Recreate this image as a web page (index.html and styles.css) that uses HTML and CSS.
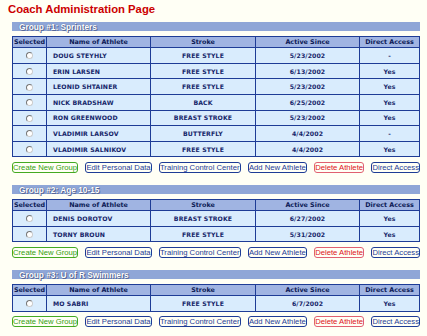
FILE: index.html
```html
<!DOCTYPE html>
<html lang="en">
<head>
    <meta charset="UTF-8">
    <title>Coach Administration Page</title>
    <link rel="stylesheet" href="styles.css">
</head>
<body>
    <h1 class="page-title">Coach Administration Page</h1>

    <div class="group">
        <div class="group-bar">Group #1: Sprinters</div>
        <table class="athletes">
            <colgroup>
                <col class="c-sel"><col class="c-name"><col class="c-stroke"><col class="c-date"><col class="c-access">
            </colgroup>
            <tr class="head">
                <th>Selected</th><th>Name of Athlete</th><th>Stroke</th><th>Active Since</th><th>Direct Access</th>
            </tr>
            <tr><td class="sel"><span class="radio"></span></td><td class="name">DOUG STEYHLY</td><td>FREE STYLE</td><td>5/23/2002</td><td>-</td></tr>
            <tr><td class="sel"><span class="radio"></span></td><td class="name">ERIN LARSEN</td><td>FREE STYLE</td><td>6/13/2002</td><td>Yes</td></tr>
            <tr><td class="sel"><span class="radio"></span></td><td class="name">LEONID SHTAINER</td><td>FREE STYLE</td><td>5/23/2002</td><td>Yes</td></tr>
            <tr><td class="sel"><span class="radio"></span></td><td class="name">NICK BRADSHAW</td><td>BACK</td><td>6/25/2002</td><td>Yes</td></tr>
            <tr><td class="sel"><span class="radio"></span></td><td class="name">RON GREENWOOD</td><td>BREAST STROKE</td><td>5/23/2002</td><td>Yes</td></tr>
            <tr><td class="sel"><span class="radio"></span></td><td class="name">VLADIMIR LARSOV</td><td>BUTTERFLY</td><td>4/4/2002</td><td>-</td></tr>
            <tr><td class="sel"><span class="radio"></span></td><td class="name">VLADIMIR SALNIKOV</td><td>FREE STYLE</td><td>4/4/2002</td><td>Yes</td></tr>
        </table>
        <div class="actions">
            <button class="btn green">Create New Group</button>
            <button class="btn">Edit Personal Data</button>
            <button class="btn">Training Control Center</button>
            <button class="btn">Add New Athlete</button>
            <button class="btn red">Delete Athlete</button>
            <button class="btn">Direct Access</button>
        </div>
    </div>

    <div class="group">
        <div class="group-bar">Group #2: Age 10-15</div>
        <table class="athletes">
            <colgroup>
                <col class="c-sel"><col class="c-name"><col class="c-stroke"><col class="c-date"><col class="c-access">
            </colgroup>
            <tr class="head">
                <th>Selected</th><th>Name of Athlete</th><th>Stroke</th><th>Active Since</th><th>Direct Access</th>
            </tr>
            <tr><td class="sel"><span class="radio"></span></td><td class="name">DENIS DOROTOV</td><td>BREAST STROKE</td><td>6/27/2002</td><td>Yes</td></tr>
            <tr><td class="sel"><span class="radio"></span></td><td class="name">TORNY BROUN</td><td>FREE STYLE</td><td>5/31/2002</td><td>Yes</td></tr>
        </table>
        <div class="actions">
            <button class="btn green">Create New Group</button>
            <button class="btn">Edit Personal Data</button>
            <button class="btn">Training Control Center</button>
            <button class="btn">Add New Athlete</button>
            <button class="btn red">Delete Athlete</button>
            <button class="btn">Direct Access</button>
        </div>
    </div>

    <div class="group">
        <div class="group-bar">Group #3: U of R Swimmers</div>
        <table class="athletes">
            <colgroup>
                <col class="c-sel"><col class="c-name"><col class="c-stroke"><col class="c-date"><col class="c-access">
            </colgroup>
            <tr class="head">
                <th>Selected</th><th>Name of Athlete</th><th>Stroke</th><th>Active Since</th><th>Direct Access</th>
            </tr>
            <tr><td class="sel"><span class="radio"></span></td><td class="name">MO SABRI</td><td>FREE STYLE</td><td>6/7/2002</td><td>Yes</td></tr>
        </table>
        <div class="actions">
            <button class="btn green">Create New Group</button>
            <button class="btn">Edit Personal Data</button>
            <button class="btn">Training Control Center</button>
            <button class="btn">Add New Athlete</button>
            <button class="btn red">Delete Athlete</button>
            <button class="btn">Direct Access</button>
        </div>
    </div>
</body>
</html>
```

FILE: styles.css
```css
body {
    margin: 0;
    background-color: #fffff5;
    font-family: "Liberation Sans", Arial, sans-serif;
}
.page-title {
    margin: 0 0 6px 8px;
    padding-top: 4.4px;
    font-size: 11.3px;
    line-height: 11.3px;
    font-weight: bold;
    color: #cc0000;
}
.group {
    width: 408px;
    margin-left: 12px;
    margin-bottom: 12px;
}
.group-bar {
    height: 9.5px;
    line-height: 10px;
    padding-left: 7px;
    background-color: #8fa6d7;
    color: #fff;
    font-size: 8.3px;
    font-weight: bold;
    text-shadow: 0 0 1px #3c4c7c, 1px 1px 0 #5a6a9a;
    margin-bottom: 4.8px;
}
.athletes {
    width: 408px;
    table-layout: fixed;
    border-collapse: separate;
    border-spacing: 1px;
    background-color: #1e3c96;
    font-family: "DejaVu Sans", Verdana, sans-serif;
    font-weight: bold;
    color: #16266a;
}
.c-sel { width: 33px; }
.c-name { width: 103px; }
.c-stroke { width: 104px; }
.c-date { width: 103px; }
.c-access { width: 59px; }
.athletes th {
    height: 10.2px;
    padding: 0;
    background-color: #a0b4e2;
    font-size: 6.4px;
    line-height: 10px;
    color: #0c1a55;
}
.athletes td {
    height: 14.6px;
    padding: 0;
    background-color: #d9ecfd;
    font-size: 6.2px;
    letter-spacing: 0.1px;
    text-align: center;
}
.athletes td.name {
    text-align: left;
    padding-left: 6px;
}
.radio {
    display: inline-block;
    width: 5px;
    height: 5px;
    border: 1px solid #777;
    border-right-color: #ccc;
    border-bottom-color: #ccc;
    border-radius: 50%;
    background-color: #fff;
    vertical-align: middle;
}
.actions {
    display: flex;
    justify-content: space-between;
    margin-top: 4.4px;
}
.btn {
    height: 11px;
    padding: 0;
    border: 1px solid #1e3c96;
    border-radius: 3px;
    background-color: #fffff5;
    color: #1e3c96;
    font-family: "Liberation Sans", Arial, sans-serif;
    font-size: 7.7px;
    line-height: 9px;
}
.btn.green {
    border-color: #44aa22;
    color: #33a011;
}
.btn.red {
    border-color: #e06070;
    color: #dd1122;
}
```
